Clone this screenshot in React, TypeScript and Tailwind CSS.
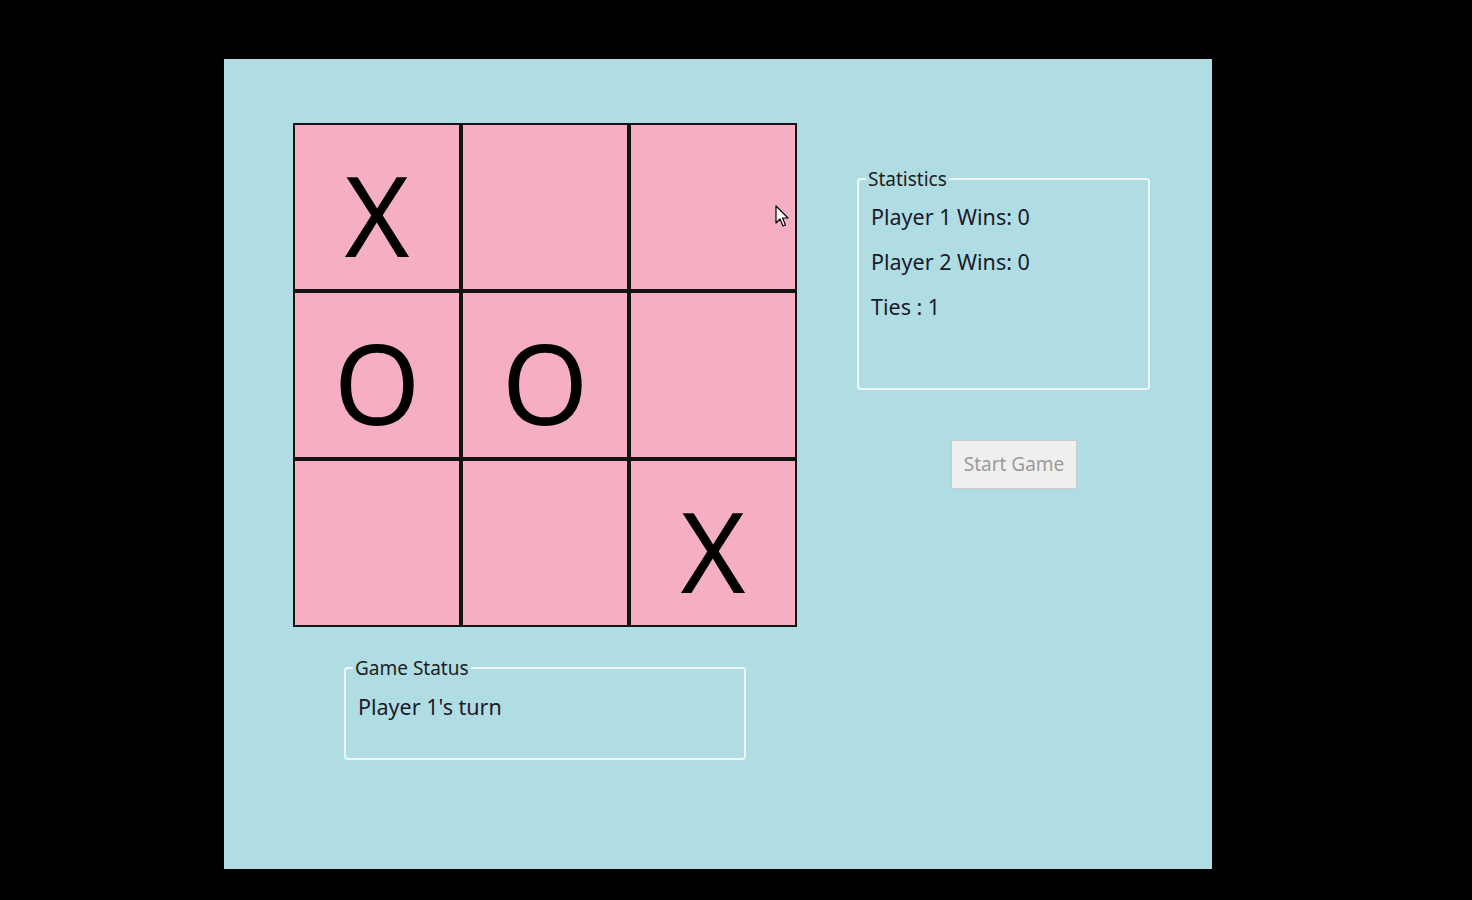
import React from 'react';

const cells = ['X', '', '', 'O', 'O', '', '', '', 'X'];

const GroupBox = ({ title, className, children }: { title: string; className: string; children: React.ReactNode }) => (
    <fieldset className={`border-2 border-[#ecf7f9] rounded-[4px] px-[10px] ${className}`}>
        <legend className="px-[2px] -ml-[3px] text-[19px] leading-[22px] text-[#1d1d1d]">{title}</legend>
        {children}
    </fieldset>
);

export default function App() {
    return (
        <div className="w-[1472px] h-[900px] bg-black pl-[224px] pt-[59px]" style={{ fontFamily: '"Noto Sans", "Open Sans", sans-serif' }}>
            <div className="relative w-[988px] h-[810px] bg-[#b0dce3] flex">
                {/* Board + status */}
                <div className="pl-[69px] pt-[64px] flex flex-col items-start w-[642px]">
                    <div className="grid grid-cols-3 gap-[4px] p-[2px] bg-[#141414] w-[504px]">
                        {cells.map((c, i) => (
                            <div key={i} className="h-[164px] bg-[#f6aec2] flex items-center justify-center pt-[14px] text-[111px] leading-none text-black">
                                {c}
                            </div>
                        ))}
                    </div>
                    <GroupBox title="Game Status" className="w-[402px] h-[103px] mt-[30px] ml-[51px]">
                        <div className="text-[21.5px] text-[#1a1a2a] pt-[12px] pl-[2px]">Player 1's turn</div>
                    </GroupBox>
                </div>

                {/* Statistics + button */}
                <div className="pt-[109px] flex flex-col">
                    <GroupBox title="Statistics" className="w-[293px] h-[222px] -ml-[9px]">
                        <div className="flex flex-col gap-[15px] pt-[12px] pl-[2px] text-[21.5px] leading-[30px] text-[#1a1a2a]">
                            <div>Player 1 Wins: 0</div>
                            <div>Player 2 Wins: 0</div>
                            <div>Ties : 1</div>
                        </div>
                    </GroupBox>
                    <button className="mt-[50px] ml-[85px] w-[126px] h-[49px] bg-[#efefef] border border-[#c9cccd] text-[19px] text-[#9b9b9b]">
                        Start Game
                    </button>
                </div>

                {/* mouse pointer */}
                <svg className="absolute left-[551px] top-[146px]" width="16" height="24" viewBox="0 0 16 24">
                    <path d="M1 1 L1 18 L5 14 L8 21 L10.5 20 L7.5 13 L13 13 Z" fill="#fff" stroke="#000" strokeWidth="1.2" strokeLinejoin="round" />
                </svg>
            </div>
        </div>
    );
}
